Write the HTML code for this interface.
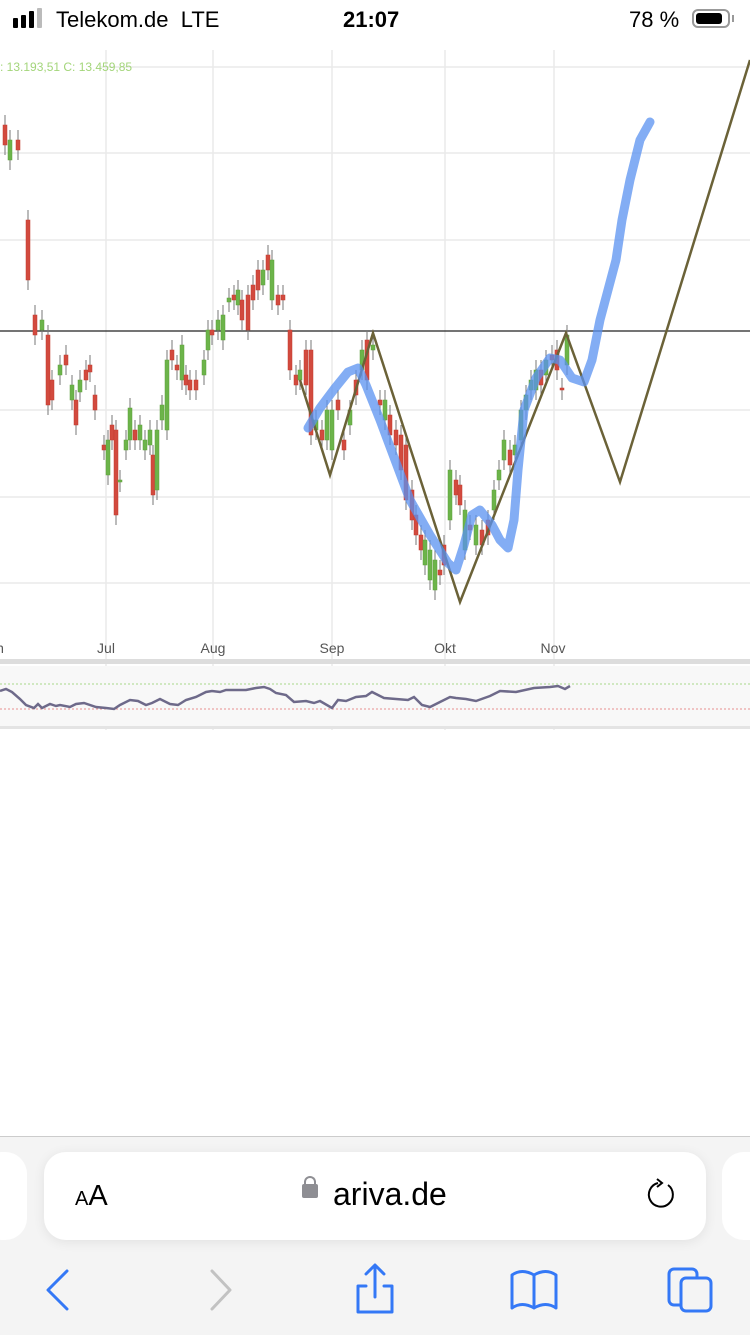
<!DOCTYPE html>
<html><head><meta charset="utf-8"><style>
body{margin:0;width:750px;height:1334px;background:#fff;position:relative;overflow:hidden;font-family:"Liberation Sans",sans-serif}
.sb{position:absolute;top:0;left:0;width:750px;height:44px;font-size:22px;color:#000}
</style></head><body>
<div class="sb">
<div style="position:absolute;left:13px;top:18px;width:5px;height:10px;background:#000;border-radius:1px"></div>
<div style="position:absolute;left:21px;top:15px;width:5px;height:13px;background:#000;border-radius:1px"></div>
<div style="position:absolute;left:29px;top:11px;width:5px;height:17px;background:#000;border-radius:1px"></div>
<div style="position:absolute;left:37px;top:8px;width:5px;height:20px;background:#bbb;border-radius:1px"></div>
<div style="position:absolute;left:56px;top:7px">Telekom.de&nbsp;&nbsp;LTE</div>
<div style="position:absolute;left:343px;top:7px;font-weight:bold">21:07</div>
<div style="position:absolute;left:629px;top:7px">78 %</div>
<div style="position:absolute;left:692px;top:9px;width:38px;height:19px;border:2px solid #999;border-radius:6px;box-sizing:border-box"><div style="margin:2px;width:26px;height:11px;background:#000;border-radius:3px"></div></div>
<div style="position:absolute;left:732px;top:15px;width:2px;height:7px;background:#999"></div>
</div>
<svg width="750" height="740" style="position:absolute;left:0;top:0" id="c">
<g stroke="#eaeaea" stroke-width="1.5">
<line x1="106" y1="50" x2="106" y2="730"/><line x1="213" y1="50" x2="213" y2="730"/><line x1="332" y1="50" x2="332" y2="730"/><line x1="445" y1="50" x2="445" y2="730"/><line x1="554" y1="50" x2="554" y2="730"/>
<line x1="100" y1="67" x2="750" y2="67"/><line x1="0" y1="153" x2="750" y2="153"/><line x1="0" y1="240" x2="750" y2="240"/><line x1="0" y1="410" x2="750" y2="410"/><line x1="0" y1="497" x2="750" y2="497"/><line x1="0" y1="583" x2="750" y2="583"/>
</g>
<text x="0" y="71" font-size="12" fill="#a3d57a">: 13.193,51  C: 13.459,85</text>
<line x1="0" y1="331" x2="750" y2="331" stroke="#222" stroke-width="1.2"/>
<g font-size="14" fill="#555" text-anchor="middle"><text x="0" y="653">n</text><text x="106" y="653">Jul</text><text x="213" y="653">Aug</text><text x="332" y="653">Sep</text><text x="445" y="653">Okt</text><text x="553" y="653">Nov</text></g>
<rect x="0" y="659" width="750" height="5" fill="#ddd"/>
<rect x="0" y="666" width="750" height="60" fill="#f8f8f8"/>
<rect x="0" y="726" width="750" height="3" fill="#e4e4e4"/>
<line x1="0" y1="684" x2="750" y2="684" stroke="#a8d88a" stroke-dasharray="2,2"/>
<line x1="0" y1="709" x2="750" y2="709" stroke="#e89090" stroke-dasharray="2,2"/>
<polyline fill="none" stroke="#6e6a8a" stroke-width="2.5" points="0,691 6,689 12,692 20,699 26,705 34,708 38,704 42,708 50,704 56,706 60,705 70,707 76,704 84,703 96,707 106,708 114,709 120,705 130,700 138,701 146,705 152,703 160,699 170,704 178,705 186,700 196,697 206,692 212,691 220,692 226,690 236,690 246,690 256,688 264,687 270,689 276,693 286,695 294,702 306,701 314,703 320,701 332,708 338,700 346,701 356,697 366,696 372,692 378,695 384,698 396,699 408,700 414,697 422,705 430,707 440,702 450,697 456,698 466,699 476,701 490,696 500,691 516,692 534,688 550,687 558,686 565,689 570,686"/>
<g id="k"></g>
<polyline fill="none" stroke="#6b6238" stroke-width="2.5" points="300,380 330,475 373,333 460,602 566,333 620,482 750,60"/>
<polyline fill="none" stroke="#5a92f0" stroke-width="9" stroke-linejoin="round" stroke-linecap="round" opacity="0.75" points="308,428 320,408 335,388 348,372 358,368 366,385 380,420 395,460 410,500 430,535 448,563 456,570 464,545 472,515 480,510 492,525 500,540 508,548 514,520 518,470 524,410 536,378 550,358 560,360 572,378 584,382 592,360 600,320 608,290 616,260 622,220 630,180 640,140 650,122"/>
</svg>
<div style="position:absolute;left:0;top:1136px;width:750px;height:198px;background:#f4f4f4;border-top:1px solid #ccc"></div>
<div style="position:absolute;left:-20px;top:1152px;width:47px;height:88px;background:#fff;border-radius:22px"></div>
<div style="position:absolute;left:722px;top:1152px;width:60px;height:88px;background:#fff;border-radius:22px"></div>
<div style="position:absolute;left:44px;top:1152px;width:662px;height:88px;background:#fff;border-radius:22px;box-shadow:0 2px 12px rgba(0,0,0,.08)"></div>
<div style="position:absolute;left:75px;top:1180px;font-size:29px;color:#000"><span style="font-size:20px">A</span>A</div>
<div style="position:absolute;left:302px;top:1184px;width:16px;height:14px;background:#8e8e93;border-radius:2px"></div>
<div style="position:absolute;left:304px;top:1176px;width:8px;height:10px;border:2px solid #8e8e93;border-bottom:none;border-radius:6px 6px 0 0"></div>
<div style="position:absolute;left:333px;top:1176px;font-size:32px;color:#000">ariva.de</div>
<svg style="position:absolute;left:644px;top:1177px" width="36" height="36" viewBox="0 0 36 36"><path d="M14 6 A12 12 0 1 0 24 8" fill="none" stroke="#000" stroke-width="2"/><path d="M13 2 L18 6 L13 10" fill="none" stroke="#000" stroke-width="2"/></svg>
<svg style="position:absolute;left:0;top:1260px" width="750" height="60"><g fill="none" stroke-width="3" stroke-linecap="round" stroke-linejoin="round">
<path d="M67 11 L48 30 L67 49" stroke="#3478f6"/>
<path d="M212 11 L230 30 L212 49" stroke="#c2c2c2"/>
<g stroke="#3478f6"><path d="M366 26 H358 V52 H392 V26 H384"/><path d="M375 37 V6 M366 14 L375 5 L384 14"/>
<path d="M512 15 Q522 8 534 15 Q546 8 556 15 V48 Q546 41 534 48 Q522 41 512 48 Z M534 15 V48"/>
<rect x="669" y="9" width="28" height="36" rx="5"/><rect x="681" y="18" width="30" height="33" rx="5" fill="#f4f4f4"/></g></g></svg>
<script>
var d=[[5,125,145,155,120,160],[10,140,160,0],[18,140,150,1],[28,220,280,1],[35,315,335,1],[42,320,330,0],[48,335,405,1],[52,380,400,1],[60,365,375,0],[66,355,365,1],[72,385,400,0],[76,400,425,1],[80,380,392,0],[86,370,380,1],[90,365,372,1],[95,395,410,1],[104,445,450,1],[108,440,475,0],[112,425,440,1],[116,430,515,1],[120,480,482,0],[126,440,450,0],[130,408,440,0],[135,430,440,1],[140,425,440,0],[145,440,450,0],[150,430,445,0],[153,455,495,1],[157,430,490,0],[162,405,420,0],[167,360,430,0],[172,350,360,1],[177,365,370,1],[182,345,380,0],[186,375,385,1],[190,380,390,1],[196,380,390,1],[204,360,375,0],[208,330,350,0],[212,330,335,1],[218,320,330,0],[223,315,340,0],[229,298,302,0],[234,295,300,1],[238,290,305,0],[242,300,320,1],[248,295,330,1],[253,285,300,1],[258,270,290,1],[263,270,285,0],[268,255,270,1],[272,260,300,0],[278,295,305,1],[283,295,300,1],[290,330,370,1],[296,375,385,1],[300,370,380,0],[306,350,385,1],[311,350,435,1],[316,420,430,0],[322,430,440,1],[327,410,440,0],[332,410,450,0],[338,400,410,1],[344,440,450,1],[350,410,425,0],[356,380,395,1],[362,350,370,0],[367,340,380,1],[373,345,350,0],[380,400,405,1],[385,400,420,0],[390,415,435,1],[396,430,445,1],[401,435,470,1],[406,445,500,1],[412,490,520,1],[416,515,535,1],[421,535,550,1],[425,540,565,0],[430,550,580,0],[435,560,590,0],[440,570,575,1],[444,545,565,1],[450,470,520,0],[456,480,495,1],[460,485,505,1],[465,510,550,0],[470,525,530,1],[476,525,545,0],[482,530,545,1],[488,520,535,1],[494,490,510,0],[499,470,480,0],[504,440,460,0],[510,450,465,1],[515,445,455,0],[521,410,440,0],[526,395,410,0],[531,380,390,0],[536,370,390,0],[541,370,385,1],[546,360,375,0],[552,355,360,1],[557,350,370,1],[562,388,390,1],[567,335,365,0]];
var s='';d.forEach(function(c){var x=c[0],t=c[1],b=c[2],col=c[3]?'#c23a2e':'#5fa03a',fill=c[3]?'#d24a3e':'#6cb44a';
s+='<line x1="'+x+'" y1="'+(t-10)+'" x2="'+x+'" y2="'+(b+10)+'" stroke="#777" stroke-width="1"/><rect x="'+(x-2)+'" y="'+t+'" width="4" height="'+Math.max(2,b-t)+'" fill="'+fill+'" stroke="'+col+'" stroke-width="0.5"/>';});
document.getElementById('k').innerHTML=s;
</script>
</body></html>
